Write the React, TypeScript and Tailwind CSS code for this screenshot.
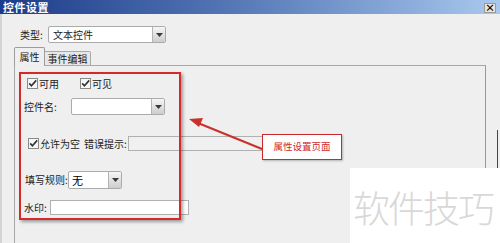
import React from 'react';

const font = { fontFamily: '"Noto Sans CJK SC", "Noto Sans", sans-serif' };

function Arrow() {
  return (
    <div className="w-[13px] h-full border-l border-[#b4b4b4] bg-gradient-to-b from-[#f6f6f6] to-[#cdcdcd] flex items-center justify-center">
      <svg width="7" height="4" viewBox="0 0 7 4">
        <polygon points="0,0 7,0 3.5,4" fill="#3a3a3a" />
      </svg>
    </div>
  );
}

function Select({ width, value, height = 17 }: { width: number; value?: string; height?: number }) {
  return (
    <div
      className="flex shrink-0 bg-white border border-[#ababab] rounded-[2px] overflow-hidden"
      style={{ width, height }}
    >
      <div className="flex-1 flex items-center pl-[3px] text-[11px] text-black leading-none">{value}</div>
      <Arrow />
    </div>
  );
}

function Check({ label }: { label: string }) {
  return (
    <div className="flex items-center shrink-0">
      <svg width="11" height="11" viewBox="0 0 11 11">
        <rect x="0.5" y="0.5" width="10" height="10" fill="#f7f7f7" stroke="#8a8a8a" />
        <path d="M2.2 5.4 L4.4 7.8 L9.2 2.4" fill="none" stroke="#333" strokeWidth="1.6" />
      </svg>
      <span className="ml-[1px] text-[10px] leading-none text-[#222] whitespace-nowrap">{label}</span>
    </div>
  );
}

export default function App() {
  return (
    <div className="relative w-[500px] h-[243px] overflow-hidden bg-[#efefef]" style={font}>
      {/* title bar */}
      <div className="h-[14px] flex items-center justify-between pl-[3px] pr-[4px] bg-gradient-to-r from-[#1d3b8a] via-[#5a7cb9] to-[#a9c9ee]">
        <span className="text-white font-bold text-[11px] leading-[13px] tracking-[0.5px]">控件设置</span>
        <div className="w-[12px] h-[10px] mt-[1px] bg-[#e4e4e4] border border-[#9a9a9a] flex items-center justify-center">
          <span className="text-[10px] font-bold leading-none text-black">×</span>
        </div>
      </div>

      <div className="border-l-2 border-[#d4d4d4] h-[229px] pl-[12px]">
        {/* type row */}
        <div className="flex items-center pt-[12px] pl-[6px]">
          <span className="text-[10px] leading-none text-[#222] w-[28px] whitespace-nowrap">类型:</span>
          <div className="flex bg-white border border-[#ababab] rounded-[2px] overflow-hidden w-[118px] h-[17px]">
            <div className="flex-1 flex items-center pl-[4px] text-[10px] text-[#222] leading-none">文本控件</div>
            <Arrow />
          </div>
        </div>

        {/* tabs */}
        <div className="flex items-end mt-[4px] relative z-10">
          <div className="h-[19px] w-[31px] border border-b-0 border-[#9c9c9c] rounded-t-[2px] bg-[#efefef] flex items-center justify-center text-[10px] leading-none text-[#222]">
            属性
          </div>
          <div className="h-[15px] w-[46px] border border-l-0 border-[#a8a8a8] rounded-tr-[2px] bg-[#e8e8e8] flex items-center justify-center text-[10px] leading-none text-[#222] whitespace-nowrap">
            事件编辑
          </div>
        </div>

        {/* panel */}
        <div className="-mt-px w-[472px] h-[200px] border border-[#a8a8a8] border-r-[#999] pl-[9px] pt-[12px]">
          <div className="flex items-center ml-[3px] gap-[21px]">
            <Check label="可用" />
            <Check label="可见" />
          </div>

          <div className="flex items-center mt-[9px]">
            <span className="text-[10px] leading-none text-[#222] w-[47px] whitespace-nowrap">控件名:</span>
            <Select width={94} />
          </div>

          <div className="flex items-center mt-[21px] ml-[4px]">
            <Check label="允许为空" />
            <span className="ml-[4px] mr-[1px] text-[10px] leading-none text-[#222] whitespace-nowrap">错误提示:</span>
            <div className="w-[180px] h-[15px] shrink-0 border border-[#b0b0b0] bg-[#f0f0f0]" />
          </div>

          <div className="flex items-center mt-[20px] ml-[1px]">
            <span className="text-[10px] leading-none text-[#222] w-[43px] whitespace-nowrap">填写规则:</span>
            <Select width={54} value="无" height={18} />
          </div>

          <div className="flex items-center mt-[11px]">
            <span className="text-[10px] leading-none text-[#222] w-[26px] whitespace-nowrap">水印:</span>
            <div className="w-[139px] h-[15px] border border-[#b0b0b0] bg-white" />
          </div>
        </div>
      </div>

      {/* window right edge */}
      <div className="absolute left-[497px] top-[130px] w-px h-[38px] bg-[#444]" />

      {/* annotation: red frame */}
      <div className="absolute left-[19px] top-[72px] w-[162px] h-[148px] border-2 border-[#d42a2a] shadow-[2px_2px_3px_rgba(0,0,0,0.35)]" />

      {/* annotation: arrow */}
      <svg className="absolute left-0 top-0" width="500" height="243" viewBox="0 0 500 243">
        <line x1="262" y1="149" x2="198" y2="123" stroke="#c9302c" strokeWidth="2" />
        <polygon points="189,119 203,118 199,127" fill="#c9302c" />
      </svg>

      {/* annotation: label */}
      <div className="absolute left-[262px] top-[134px] w-[80px] h-[26px] bg-white border border-[#cc2a2a] flex items-center justify-center text-[9.5px] leading-none text-[#d02a2a] whitespace-nowrap shadow-[1px_1px_2px_rgba(0,0,0,0.25)]">
        属性设置页面
      </div>

      {/* watermark */}
      <div className="absolute left-[350px] top-[168px] w-[150px] h-[75px] bg-white flex items-center pl-[3px] pt-[4px]">
        <span className="text-[37px] leading-none tracking-[-2px] text-[#d8d8d8] font-light whitespace-nowrap">软件技巧</span>
      </div>
    </div>
  );
}
